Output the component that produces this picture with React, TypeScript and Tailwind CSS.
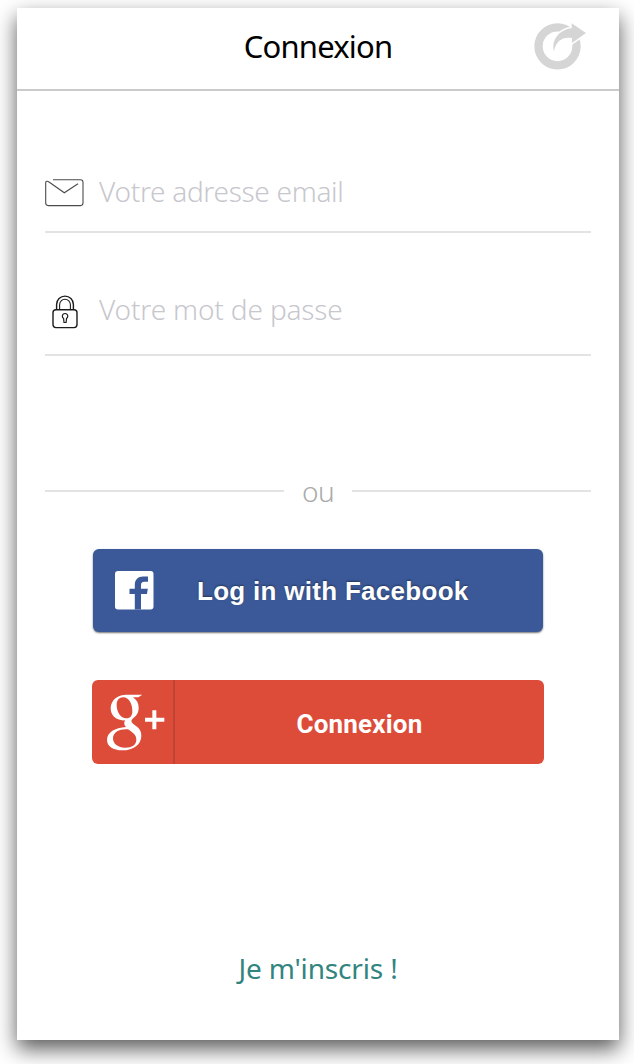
import type { ReactNode } from "react";

function ShareLogo() {
  return (
    <svg className="h-[50px] w-[54px]" viewBox="42 62 162 150">
      <circle cx="112.500" cy="138" r="57" fill="none" stroke="#d5d5d5" strokeWidth="25" />
      <path
        d="M102 153C93 119 119 87 155 84V69L198 98L156 128V113C126 109 108 122 102 153Z"
        fill="#d5d5d5"
        stroke="#fff"
        strokeWidth="9"
        paintOrder="stroke"
      />
    </svg>
  );
}

function MailIcon() {
  return (
    <svg className="h-7 w-[39px]" viewBox="0 0 39 28" fill="none" stroke="#4b4b4e" strokeWidth="1.1">
      <path d="M8 .8h27.500a2.500 2.500 0 0 1 2.500 2.500v20.800a2.500 2.500 0 0 1-2.500 2.500H3.200A2.500 2.500 0 0 1 .7 24.100V3.600C.7 2 2.400 1.800 4 3l15.300 10.800L33 4.800" />
    </svg>
  );
}

function LockIcon() {
  return (
    <svg className="h-[34px] w-[27px]" viewBox="0 0 27 34" fill="none" stroke="#1c1c1c" strokeWidth="1.4">
      <rect x="1" y="14.800" width="24" height="17.800" rx="3" />
      <path d="M4.600 14.800V9.500a8.400 8.400 0 0 1 16.800 0v5.300" />
      <path d="M7.600 14.800V9.700a5.400 5.400 0 0 1 10.800 0v5.100" strokeWidth="1.1" />
      <path d="M11.600 23.500a2.700 2.700 0 1 1 2.900 0l-.4 4h-2.100z" strokeWidth="1.200" />
    </svg>
  );
}

function FacebookIcon() {
  return (
    <svg className="h-[39px] w-[39px]" viewBox="0 0 39 39">
      <rect width="38.500" height="38.500" rx="3" fill="#fff" />
      <path
        d="M19.800 38.500V23H14.500V17.700H19.800V14C19.800 8.500 23 5.500 28 5.500H33V10.800H29.500C26.700 10.800 26 12 26 14.300V17.700H32.800L32 23H26V38.500Z"
        fill="#3b5998"
      />
    </svg>
  );
}

function GooglePlusIcon() {
  return (
    <svg className="h-[60px] w-[60px]" viewBox="80 70 180 180" fill="#fff">
      <path
        fillRule="evenodd"
        d="M138 75H186L174 83H158C170 91 175 101 175 114C175 130 168 138 159 145C152 151 151 156 158 162L170 171C179 178 183 186 183 198C183 224 160 242 126 242C98 242 80 230 80 211C80 188 104 174 137 172C131 166 130 160 134 152C107 154 91 137 91 116C91 92 111 75 138 75ZM129 83C116 83 109 92 109 106C109 127 121 146 138 146C150 146 156 138 156 124C156 103 146 83 129 83ZM143 179C116 178 98 188 98 206C98 223 113 234 134 234C156 234 168 225 168 210C168 196 159 190 143 179Z"
      />
      <path d="M216 122h12v22h24v12h-24v23h-12v-23h-22v-12h22z" />
    </svg>
  );
}

interface FieldProps {
  icon: ReactNode;
  label: string;
  className: string;
  inputClassName: string;
}

function Field({ icon, label, className, inputClassName }: FieldProps) {
  return (
    <label className={`mx-7 flex items-start border-b-2 border-[#e3e3e3] ${className}`}>
      <span className="flex w-[54px] shrink-0">{icon}</span>
      <input
        placeholder={label}
        className={`h-10 w-full min-w-0 bg-transparent text-[28px] font-[350] outline-none placeholder:text-[#c7c7cd] placeholder:opacity-100 ${inputClassName}`}
      />
    </label>
  );
}

export default function App() {
  return (
    <div className="h-[1064px] w-full overflow-hidden bg-white pt-2 pl-[17px] font-['Noto_Sans',sans-serif]">
      <main className="flex h-[1032px] w-[602px] flex-col bg-white shadow-[0_9px_20px_rgba(0,0,0,0.65)]">
        <header className="grid h-[83px] shrink-0 grid-cols-[120px_1fr_120px] border-b-2 border-[#cacaca]">
          <h1 className="col-start-2 pt-[16px] text-center text-[31px] leading-[44px] tracking-[-0.8px] text-black">Connexion</h1>
          <div className="pt-[13px] pl-[35px]"><ShareLogo /></div>
        </header>

        <Field
          icon={<span className="pt-[8px]"><MailIcon /></span>}
          label="Votre adresse email"
          className="mt-[80px] h-[62px] shrink-0"
          inputClassName="tracking-[-0.3px]"
        />
        <Field
          icon={<span className="pt-[6px] pl-[7px]"><LockIcon /></span>}
          label="Votre mot de passe"
          className="mt-[56px] h-[67px] shrink-0"
          inputClassName="tracking-[-0.15px]"
        />

        <div className="mx-7 mt-[115px] flex h-10 shrink-0 items-center">
          <span className="h-[2px] w-[239px] bg-[#e3e3e3]" />
          <span className="flex-1 text-center text-[28px] font-[350] tracking-[-0.5px] text-[#aaa]">ou</span>
          <span className="h-[2px] w-[239px] bg-[#e3e3e3]" />
        </div>

        <button className="mt-[38px] ml-[76px] flex h-[83px] w-[450px] shrink-0 items-center rounded-[6px] bg-[#3b5998] pl-[22px] text-white shadow-[0_1px_2px_rgba(0,0,0,0.55)]">
          <FacebookIcon />
          <span className="ml-[43px] font-['Liberation_Sans',sans-serif] text-[26px] leading-8 font-bold tracking-[0.29px] whitespace-nowrap [text-shadow:0_-1px_2px_rgba(0,0,0,0.4)]">
            Log in with Facebook
          </span>
        </button>

        <button className="mt-[48px] ml-[75px] flex h-[84px] w-[452px] shrink-0 items-center rounded-[6px] bg-[#dd4b39] text-white">
          <span className="flex h-full w-[83px] items-start border-r-2 border-[#bf4436] pt-[13px] pl-[15px]"><GooglePlusIcon /></span>
          <span className="flex-1 pt-[4px] text-center font-[Roboto,sans-serif] text-[26px] leading-8 font-bold tracking-[0.2px]">Connexion</span>
        </button>

        <button className="mt-[184px] self-center text-[28px] leading-[40px] tracking-[-0.15px] text-[#328480]">Je m'inscris !</button>
      </main>
    </div>
  );
}
